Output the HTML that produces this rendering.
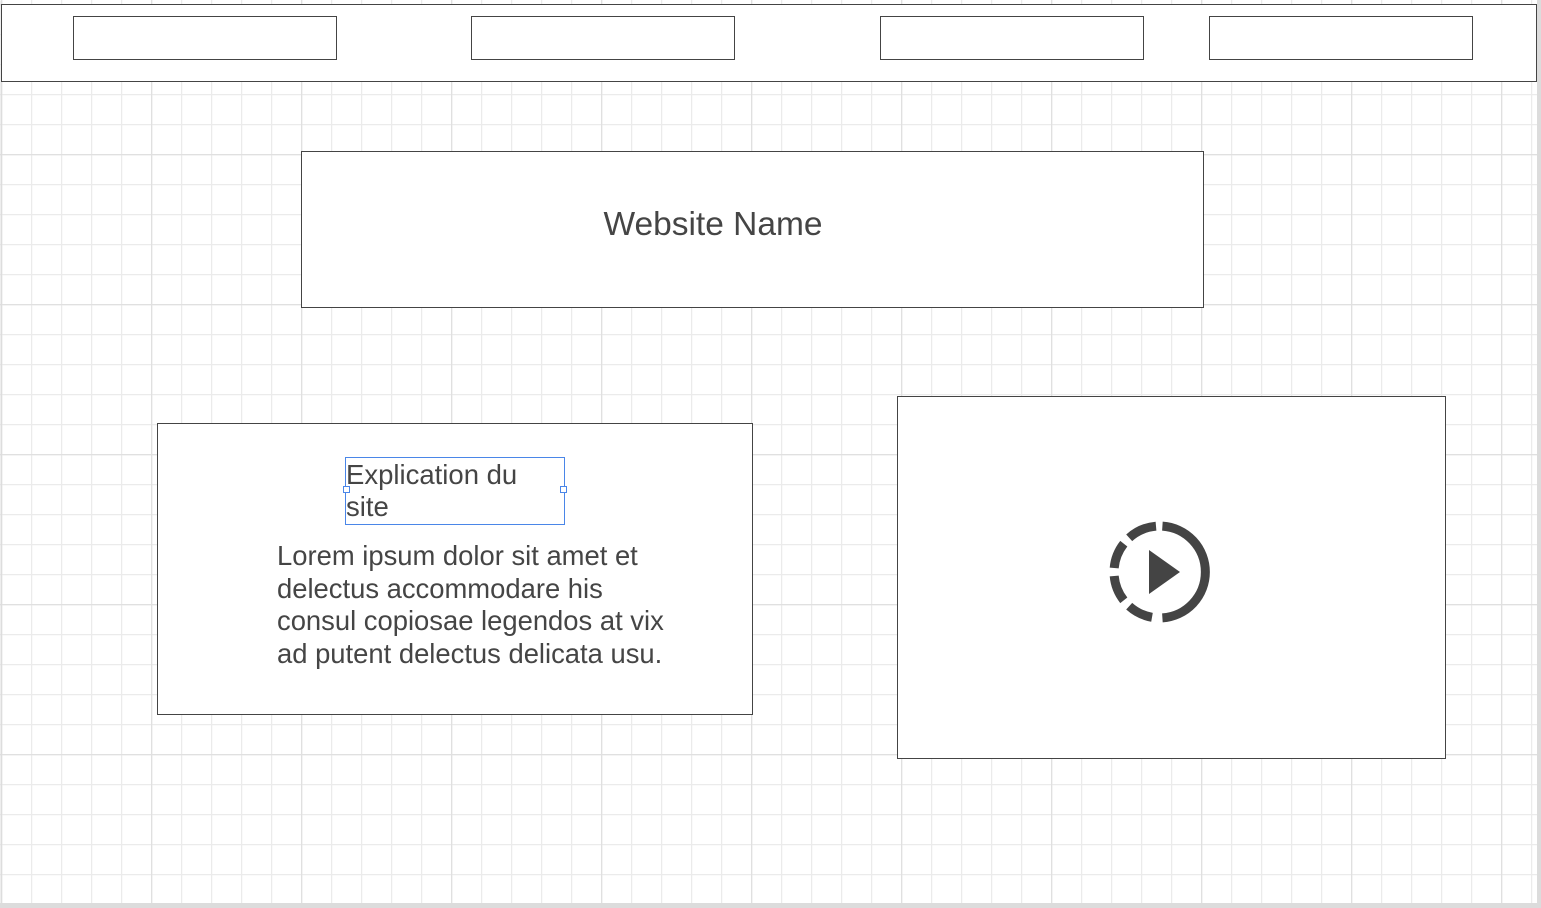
<!DOCTYPE html>
<html><head><meta charset="utf-8"><style>
html,body{margin:0;padding:0;width:1541px;height:908px;overflow:hidden;background:#fff;}
.abs{position:absolute;box-sizing:border-box;}
.t{font-family:"Liberation Sans",Arial,sans-serif;color:#454545;}
</style></head><body>
<svg class="abs" style="left:0;top:0" width="1541" height="908">
<defs>
<pattern id="minor" x="1" y="4" width="30" height="30" patternUnits="userSpaceOnUse">
<path d="M0 0V30M0 0H30" stroke="#ebebeb" stroke-width="2.5" fill="none"/>
</pattern>
<pattern id="major" x="1" y="4" width="150" height="150" patternUnits="userSpaceOnUse">
<path d="M0 0V150M0 0H150" stroke="#e0e0e0" stroke-width="2.5" fill="none"/>
</pattern>
</defs>
<rect x="0" y="0" width="1537" height="903" fill="#fff"/>
<rect x="0" y="0" width="1537" height="903" fill="url(#minor)"/>
<rect x="0" y="0" width="1537" height="903" fill="url(#major)"/>
<rect x="1537" y="0" width="4" height="908" fill="#dcdcdc"/>
<rect x="0" y="903" width="1541" height="5" fill="#dcdcdc"/>
<rect x="0.5" y="0.5" width="1.5" height="903" fill="#ddd"/>
</svg>
<div class="abs" style="left:1px;top:4px;width:1536px;height:78px;background:#fff;border:1px solid #444;"></div>
<div class="abs" style="left:73px;top:16px;width:264px;height:44px;border:1px solid #444;background:#fff"></div>
<div class="abs" style="left:471px;top:16px;width:264px;height:44px;border:1px solid #444;background:#fff"></div>
<div class="abs" style="left:880px;top:16px;width:264px;height:44px;border:1px solid #444;background:#fff"></div>
<div class="abs" style="left:1209px;top:16px;width:264px;height:44px;border:1px solid #444;background:#fff"></div>

<div class="abs" style="left:301px;top:151px;width:903px;height:157px;border:1px solid #444;background:#fff"></div>
<div class="abs t" style="left:560px;top:205px;width:306px;text-align:center;font-size:33.5px;line-height:40px;">Website Name</div>

<div class="abs" style="left:157px;top:423px;width:596px;height:292px;border:1px solid #444;background:#fff"></div>
<div class="abs" style="left:345px;top:457px;width:220px;height:68px;border:1px solid #4a86e8;"></div>
<div class="abs" style="left:343px;top:486px;width:7px;height:7px;border:1px solid #4a86e8;background:#fff"></div>
<div class="abs" style="left:560px;top:486px;width:7px;height:7px;border:1px solid #4a86e8;background:#fff"></div>
<div class="abs t" style="left:346px;top:459px;width:230px;font-size:27.5px;line-height:32px;">Explication du<br>site</div>
<div class="abs t" style="left:277px;top:540px;width:460px;font-size:27.4px;line-height:32.5px;">Lorem ipsum dolor sit amet et<br>delectus accommodare his<br>consul copiosae legendos at vix<br>ad putent delectus delicata usu.</div>

<div class="abs" style="left:897px;top:396px;width:549px;height:363px;border:1px solid #444;background:#fff"></div>
<svg class="abs" style="left:0;top:0" width="1541" height="908">
<g fill="none" stroke="#444" stroke-width="9">
<path d="M1162.4 526.1A46 46 0 0 1 1162.4 617.9"/>
<path d="M1152 617.3A46 46 0 0 1 1129.2 606.2"/>
<path d="M1123.8 600.3A46 46 0 0 1 1114.2 576"/>
<path d="M1114.2 568A46 46 0 0 1 1123.8 543.7"/>
<path d="M1129.2 537.8A46 46 0 0 1 1156 526.2"/>
</g>
<path d="M1149 550L1180 572L1149 594Z" fill="#444"/>
</svg>
</body></html>
